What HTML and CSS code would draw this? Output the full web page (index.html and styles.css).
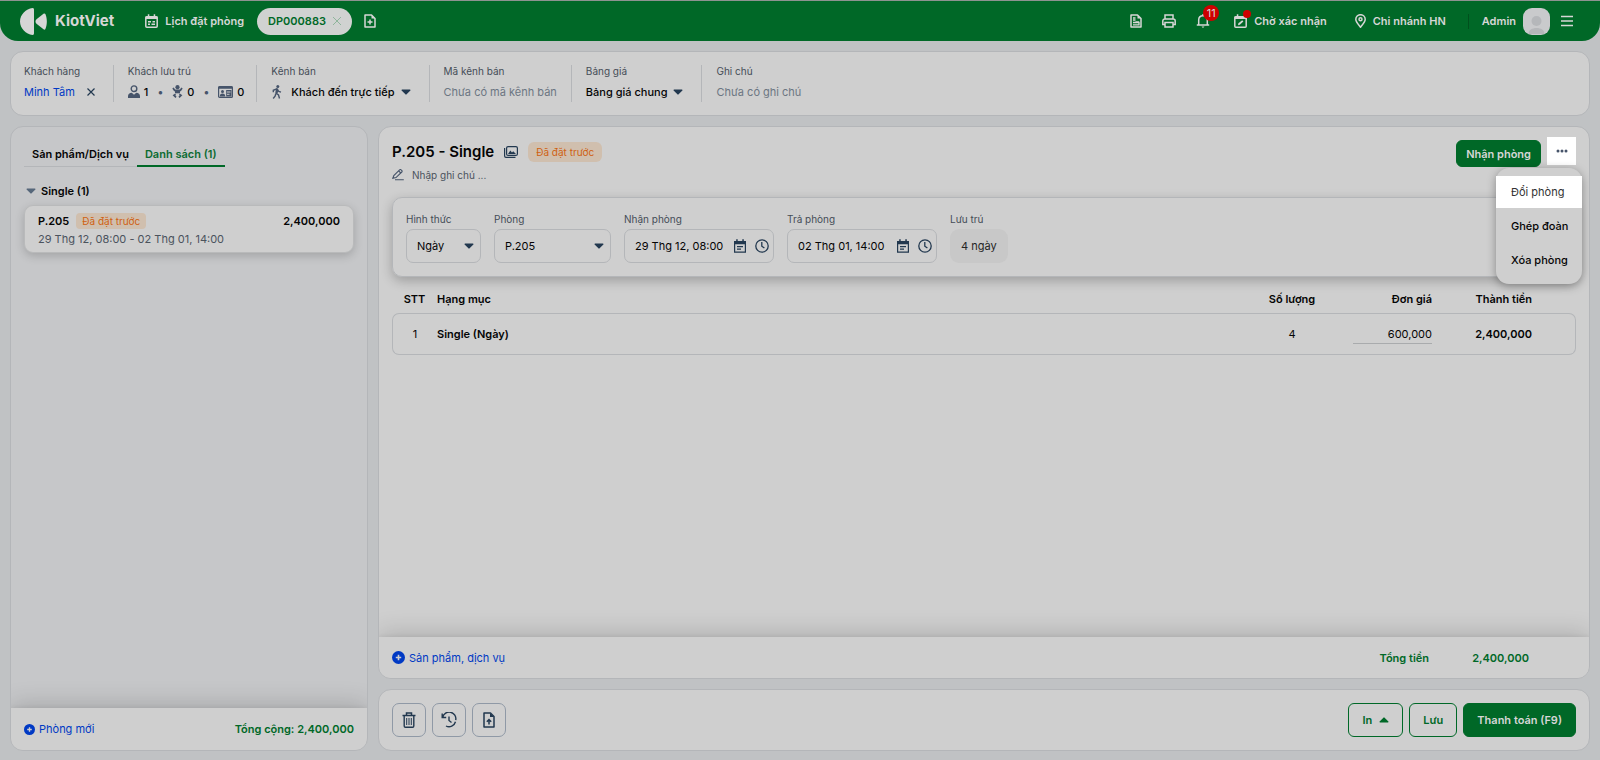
FILE: index.html
```html
<!DOCTYPE html>
<html lang="vi">
<head>
<meta charset="utf-8">
<title>KiotViet - DP000883</title>
<link rel="stylesheet" href="styles.css">
</head>
<body>
<svg class="sprite" aria-hidden="true">
  <symbol id="caret" viewBox="0 0 10 6"><path d="M1 .5h8a.6.6 0 0 1 .4 1L5.600 5.300a.8.8 0 0 1-1.200 0L.6 1.500a.6.6 0 0 1 .4-1z" fill="currentColor"/></symbol>
  <symbol id="plus-circle" viewBox="0 0 12 12"><circle cx="6" cy="6" r="6" fill="currentColor"/><path d="M6 3.500v5M3.500 6h5" stroke="#cfcfcf" stroke-width="1.500"/></symbol>
  <symbol id="calendar" viewBox="0 0 14 14"><path d="M1.600 2.500h10.800v10.700H1.600z" fill="none" stroke="currentColor" stroke-width="1.200"/><path d="M1 2h12v3.200H1zM3.200.3h1.500v2H3.200zM9.300.3h1.500v2H9.300z" fill="currentColor"/><path d="M4 7.600h6M4 10.200h4" stroke="currentColor" stroke-width="1.200"/></symbol>
  <symbol id="clock" viewBox="0 0 14 14"><circle cx="7" cy="7" r="6.200" fill="none" stroke="currentColor" stroke-width="1.300"/><path d="M6.800 3v4.200l2.600 1.800" fill="none" stroke="currentColor" stroke-width="1.300"/></symbol>
</svg>

<header class="topbar">
  <a class="brand" href="#">
    <svg width="27" height="27" viewBox="0 0 27 27"><path d="M12.500 0c1.300 0 1.500.8 1.500 2v23c0 1.200-.2 2-1.500 2C6 26 0 20.500 0 13.500S6 1 12.500 0zM15.500 13.500c0-1 .5-1.600 1-2.200l7-5.500c.8-.7 1.600-.5 2 .5 1.800 4.500 1.800 10 0 14.500-.4 1-1.200 1.200-2 .5l-7-5.600c-.5-.6-1-1.200-1-2.200z" fill="currentColor"/></svg>
    <span>KiotViet</span>
  </a>
  <a class="toplink schedule" href="#">
    <svg width="13" height="14" viewBox="0 0 13 14"><rect x=".8" y="2.700" width="11.400" height="10.500" rx="1" fill="none" stroke="currentColor" stroke-width="1.500"/><path d="M.5 2.500h12V5H.5zM2.800.3h1.500v2.500H2.800zM8.700.3h1.500v2.500H8.700z" fill="currentColor"/><path d="M3 7.700h3M7.500 7.700H10M3 10.300h2M6.500 10.300H10" stroke="currentColor" stroke-width="1.500"/></svg>
    Lịch đặt phòng
  </a>
  <div class="booking-tab">
    <span>DP000883</span>
    <button class="plain faint" aria-label="Đóng"><svg width="10" height="10" viewBox="0 0 10 10"><path d="M1 1l8 8M9 1L1 9" stroke="currentColor"/></svg></button>
  </div>
  <button class="plain new-tab" aria-label="Thêm"><svg width="12" height="14" viewBox="0 0 12 14"><path d="M1 1h6.500L11 4.500V13H1z" fill="none" stroke="currentColor" stroke-width="1.500" stroke-linejoin="round"/><path d="M7.500 1v3.500H11z" fill="currentColor"/><path d="M6 5.500v5M3.500 8h5" stroke="currentColor" stroke-width="1.500"/></svg></button>

  <nav class="tools">
    <button class="plain" aria-label="Tài liệu"><svg width="12" height="14" viewBox="0 0 12 14"><path d="M1 1h6.500L11 4.500V13H1z" fill="none" stroke="currentColor" stroke-width="1.500" stroke-linejoin="round"/><path d="M7.500 1v3.500H11z" fill="currentColor"/><path d="M3 4h2.500M3 6h2.500M3 8.500h6v2.300H3M5.500 8h3.500" fill="none" stroke="currentColor" stroke-width="1.300"/></svg></button>
    <button class="plain" aria-label="In"><svg width="14" height="14" viewBox="0 0 14 14" fill="none" stroke="currentColor" stroke-width="1.500"><path d="M3 5V1h8v4M3 10.500H.8V7A2 2 0 0 1 2.800 5h8.400a2 2 0 0 1 2 2v3.500H11M3 8.500h8V13H3z"/></svg></button>
    <button class="plain bell" aria-label="Thông báo"><svg width="14" height="14" viewBox="0 0 14 14"><path d="M.8 11h12.400M2.700 11V6c0-2.500 1.600-4.300 4.300-4.300S11.300 3.500 11.300 6v5" fill="none" stroke="currentColor" stroke-width="1.500"/><path d="M5.500 12.500h3L7 14zM6.300 0h1.400v2H6.300z" fill="currentColor"/></svg><span class="count">11</span></button>
    <button class="plain toplink pending"><span class="dotted"><svg width="13" height="14" viewBox="0 0 13 14"><rect x=".8" y="2.700" width="11.400" height="10.500" rx="1" fill="none" stroke="currentColor" stroke-width="1.500"/><path d="M.5 2.500h12V5H.5zM2.800.3h1.500v2.500H2.800z" fill="currentColor"/><path d="M4 11.200l.4-1.900 3.800-3 1.200 1.300-3.600 3.200z" fill="currentColor"/></svg><i class="dot"></i></span>Chờ xác nhận</button>
    <button class="plain toplink branch"><svg width="11" height="14" viewBox="0 0 11 14" fill="none" stroke="currentColor" stroke-width="1.500"><path d="M5.500 13.200C3 10.200.8 8 .8 5.300a4.700 4.600 0 0 1 9.400 0c0 2.700-2.200 4.900-4.700 7.900z"/><circle cx="5.500" cy="5.300" r="1.500"/></svg>Chi nhánh HN</button>
    <button class="plain toplink account">Admin
      <svg width="27" height="27" viewBox="0 0 27 27"><rect width="27" height="27" rx="9" fill="#c9cacc"/><circle cx="13.500" cy="13" r="5" fill="#b5b7ba"/><path d="M5.500 26c0-4 3.500-6 8-6s8 2 8 6z" fill="#b5b7ba"/></svg></button>
    <button class="plain" aria-label="Menu"><svg width="12" height="12" viewBox="0 0 12 12"><path d="M0 1.500h12M0 6h12M0 10.500h12" stroke="currentColor" stroke-width="1.500"/></svg></button>
  </nav>
</header>

<main class="page">
  <section class="card info">
    <div class="info-cell"><span class="label">Khách hàng</span>
      <div class="value"><a class="link" href="#">Minh Tâm</a><button class="plain clear" aria-label="Xóa khách"><svg width="8" height="8" viewBox="0 0 8 8"><path d="M.5.5l7 7M7.500.5l-7 7" stroke="currentColor" stroke-width="1.200"/></svg></button></div></div>
    <div class="info-cell guest-cell"><span class="label">Khách lưu trú</span>
      <div class="value guests">
        <span><svg width="12" height="13" viewBox="0 0 12 13"><circle cx="6" cy="3.700" r="2.800" fill="none" stroke="currentColor" stroke-width="1.400"/><path d="M0 13v-1.800C0 9 1.500 8 3.800 7.800L6 9.800l2.200-2C10.500 8 12 9 12 11.200V13z" fill="currentColor"/></svg>1</span>
        <i>•</i>
        <span><svg width="11" height="13" viewBox="0 0 11 13"><circle cx="5.500" cy="2.200" r="2.100" fill="currentColor"/><path d="M1 3l1.600 2.300h5.800L10 3" fill="none" stroke="currentColor" stroke-width="1.700"/><path d="M3 5h5v3.300H3z" fill="currentColor"/><path d="M3.600 9.300L2 10.300l2 2M7.400 9.300l1.600 1-2 2" fill="none" stroke="currentColor" stroke-width="1.700"/></svg>0</span>
        <i>•</i>
        <span><svg class="idcard" width="15" height="12" viewBox="0 0 15 12"><rect x=".6" y=".6" width="13.800" height="10.800" rx="1" fill="none" stroke="currentColor" stroke-width="1.200"/><path d="M.5.5h14v2.200H.5zM8.200 4h5.300v6.500H8.200z" fill="currentColor"/><circle cx="4.500" cy="5.500" r="1.500" fill="currentColor"/><path d="M1.800 10.500c0-2.200 1-2.900 2.700-2.900s2.700.7 2.700 2.900z" fill="currentColor"/><path d="M9 6h3.500M9 8.300h2.500" stroke="#cfcfcf" stroke-width="1"/></svg>0</span>
      </div></div>
    <div class="info-cell pick-cell"><span class="label">Kênh bán</span>
      <button class="plain value pick"><svg class="walk" width="12" height="14" viewBox="0 0 12 14"><circle cx="6.800" cy="1.500" r="1.500" fill="currentColor"/><path d="M5 3.500L7.200 3.800 7 7.500 5.500 8.500 4.300 8z" fill="currentColor"/><path d="M2.300 7.300V5.300L5.800 3.800 7.800 6.500l2.200.7M5 8l2.500 2L8.500 13.500M4.800 8.500L4.200 11l-2 2.500" fill="none" stroke="currentColor" stroke-width="1.400"/></svg>Khách đến trực tiếp<svg class="caret" width="10" height="6"><use href="#caret"/></svg></button></div>
    <div class="info-cell"><span class="label">Mã kênh bán</span><span class="value muted">Chưa có mã kênh bán</span></div>
    <div class="info-cell pick-cell"><span class="label">Bảng giá</span>
      <button class="plain value pick">Bảng giá chung<svg class="caret" width="10" height="6"><use href="#caret"/></svg></button></div>
    <div class="info-cell"><span class="label">Ghi chú</span><span class="value muted">Chưa có ghi chú</span></div>
  </section>

  <div class="columns">
    <aside class="card side">
      <div class="side-body">
        <div class="tabs"><button class="tab">Sản phẩm/Dịch vụ</button><button class="tab active">Danh sách (1)</button></div>
        <button class="plain group"><svg width="10" height="6"><use href="#caret"/></svg>Single (1)</button>
        <article class="room">
          <div class="room-top"><b>P.205</b><span class="tag small">Đã đặt trước</span><b class="amount">2,400,000</b></div>
          <div class="room-date">29 Thg 12, 08:00 - 02 Thg 01, 14:00</div>
        </article>
      </div>
      <footer class="side-foot">
        <button class="plain link add"><svg width="11" height="11"><use href="#plus-circle"/></svg>Phòng mới</button>
        <b class="green">Tổng cộng: 2,400,000</b>
      </footer>
    </aside>

    <div class="work">
      <section class="card detail">
        <div class="detail-body">
          <div class="head">
            <div class="head-text">
              <div class="title-row">
                <h1>P.205 - Single</h1>
                <svg class="photo" width="14" height="12" viewBox="0 0 14 12"><rect x="2.600" y=".6" width="10.800" height="8.800" rx="1.500" fill="none" stroke="currentColor" stroke-width="1.200"/><path d="M.6 2v8a1.400 1.400 0 0 0 1.400 1.400h9.500" fill="none" stroke="currentColor" stroke-width="1.200"/><path d="M4 8l2.300-3.500L8 6.500l1.200-1.300L12 8z" fill="currentColor"/></svg>
                <span class="tag">Đã đặt trước</span>
              </div>
              <button class="plain memo"><svg width="12" height="12" viewBox="0 0 12 12" fill="none" stroke="currentColor" stroke-width="1.100"><path d="M.8 9.300L1.800 6.600 7.600.8a1 1 0 0 1 1.500 0l.7.700a1 1 0 0 1 0 1.500L4 8.600zM6.600 1.800l2.200 2.200M3 10.700h8.800"/></svg>Nhập ghi chú ...</button>
            </div>
            <div class="head-actions">
              <button class="btn solid">Nhận phòng</button>
              <div class="more-wrap">
                <button class="more" aria-label="Thêm thao tác"><svg width="12" height="4" viewBox="0 0 12 4" fill="currentColor"><circle cx="2" cy="2" r="1.500"/><circle cx="6" cy="2" r="1.500"/><circle cx="10" cy="2" r="1.500"/></svg></button>
                <div class="menu" role="menu">
                  <button class="menu-item current" role="menuitem">Đổi phòng</button>
                  <button class="menu-item" role="menuitem">Ghép đoàn</button>
                  <button class="menu-item" role="menuitem">Xóa phòng</button>
                </div>
              </div>
            </div>
          </div>

          <form class="stay">
            <div class="field w-type"><label for="type">Hình thức</label>
              <div class="box"><select id="type"><option>Ngày</option></select><svg class="caret" width="10" height="6"><use href="#caret"/></svg></div></div>
            <div class="field w-room"><label for="room">Phòng</label>
              <div class="box"><select id="room"><option>P.205</option></select><svg class="caret" width="10" height="6"><use href="#caret"/></svg></div></div>
            <div class="field w-date"><label for="from">Nhận phòng</label>
              <div class="box"><input id="from" type="text" value="29 Thg 12, 08:00"><svg width="14" height="14"><use href="#calendar"/></svg><svg width="14" height="14"><use href="#clock"/></svg></div></div>
            <div class="field w-date"><label for="to">Trả phòng</label>
              <div class="box"><input id="to" type="text" value="02 Thg 01, 14:00"><svg width="14" height="14"><use href="#calendar"/></svg><svg width="14" height="14"><use href="#clock"/></svg></div></div>
            <div class="field"><span class="label">Lưu trú</span><span class="days">4 ngày</span></div>
          </form>

          <table class="items">
            <thead><tr><th class="c-no">STT</th><th class="c-name">Hạng mục</th><th class="c-qty">Số lượng</th><th class="c-price">Đơn giá</th><th class="c-total">Thành tiền</th><th class="c-end"></th></tr></thead>
            <tbody><tr><td class="c-no">1</td><td class="c-name strong">Single (Ngày)</td><td class="c-qty">4</td><td class="c-price"><input type="text" value="600,000" aria-label="Đơn giá"></td><td class="c-total strong">2,400,000</td><td class="c-end"></td></tr></tbody>
          </table>
        </div>
        <footer class="detail-foot">
          <button class="plain link add"><svg width="13" height="13"><use href="#plus-circle"/></svg>Sản phẩm, dịch vụ</button>
          <b class="green sum-label">Tổng tiền</b><b class="green sum">2,400,000</b>
        </footer>
      </section>

      <section class="card actions">
        <button class="icon-btn" aria-label="Xóa"><svg width="14" height="16" viewBox="0 0 14 16" fill="none" stroke="currentColor"><path d="M.5 3.500h13M4.500 3.500V1h5v2.500" stroke-width="1.500"/><path d="M2.200 3.500V14a1.200 1.200 0 0 0 1.200 1.200h7.200a1.200 1.200 0 0 0 1.200-1.200V3.500" stroke-width="1.400"/><path d="M4.700 6v7M7 6v7M9.300 6v7" stroke-width="1"/></svg></button>
        <button class="icon-btn" aria-label="Lịch sử"><svg width="16" height="16" viewBox="0 0 16 16" fill="none" stroke="currentColor" stroke-width="1.400"><path d="M1.200 1.500v4h4M1.700 5.300A6.600 6.600 0 0 1 14.700 8.200M14.500 9.800A6.700 6.700 0 0 1 5 14M8 4.500V8.500l2.500 2"/></svg></button>
        <button class="icon-btn" aria-label="Tải lên"><svg width="12" height="16" viewBox="0 0 12 16"><path d="M1 1h6.500L11 4.500V15H1z" fill="none" stroke="currentColor" stroke-width="1.500" stroke-linejoin="round"/><path d="M7 1v4h4z" fill="currentColor"/><path d="M6 12.500V8M3.800 9.700L6 7.500l2.200 2.200" fill="none" stroke="currentColor" stroke-width="1.500"/></svg></button>
        <button class="btn outline push">In<svg class="flip" width="10" height="6"><use href="#caret"/></svg></button>
        <button class="btn outline">Lưu</button>
        <button class="btn solid">Thanh toán (F9)</button>
      </section>
    </div>
  </div>
</main>
</body>
</html>
```
FILE: styles.css
```css
:root {
  --bg: #c0c2c4;
  --surface: #cfcfcf;
  --line: #b4b6b9;
  --green: #006827;
  --on-green: #d6d6d6;
  --slate: #46546a;
  --navy: #22384f;
  --blue: #0039c4;
}

* { box-sizing: border-box; }

body {
  margin: 0;
  min-height: 100vh;
  display: flex;
  flex-direction: column;
  background: var(--bg);
  color: #050505;
  font: 400 11px/16px Inter, "Noto Sans", sans-serif;
}

svg { display: block; flex: none; }
.sprite { position: absolute; width: 0; height: 0; }
button, input, select { font: inherit; color: inherit; }
button { cursor: pointer; }
a { color: inherit; text-decoration: none; }
b { font-weight: 600; }

.plain { display: flex; align-items: center; padding: 0; border: 0; background: none; }

/* Top bar */
.topbar {
  display: flex;
  align-items: center;
  height: 41px;
  padding: 0 27px 0 20px;
  border-top: 1px solid #8d9390;
  border-radius: 0 0 18px 18px;
  background: var(--green);
  color: var(--on-green);
}
.brand { display: flex; align-items: center; gap: 8px; font-size: 15px; font-weight: 700; }
.toplink { display: flex; align-items: center; gap: 7px; font-weight: 600; }
.schedule { margin-left: 31px; }
.booking-tab {
  display: flex;
  align-items: center;
  gap: 6px;
  height: 27px;
  margin-left: 13px;
  padding: 0 10px 0 11px;
  border-radius: 14px;
  background: #d0d2d1;
  color: var(--green);
  font-weight: 600;
}
.faint { color: #8fb59c; }
.new-tab { margin-left: 12px; }
.tools { display: flex; align-items: center; margin-left: auto; gap: 20px; }
.bell { position: relative; }
.count {
  position: absolute;
  left: 7px;
  top: -9px;
  min-width: 16px;
  height: 16px;
  border-radius: 8px;
  background: #cf0000;
  text-align: center;
}
.pending { margin-left: 4px; }
.dotted { position: relative; }
.dot { position: absolute; right: -4px; top: -4px; width: 8px; height: 8px; border-radius: 50%; background: #cf0000; }
.branch { margin-left: 8px; }
.account { margin: 0 -9px 0 2px; padding-left: 14px; background: linear-gradient(#00501d, #00501d) left center / 1px 15px no-repeat; }

/* Page frame */
.page { flex: 1; display: flex; flex-direction: column; gap: 10px; padding: 10px 10px 9px; }
.card { border: 1px solid var(--line); border-radius: 13px; background: var(--surface); }

/* Booking info */
.info { display: flex; padding: 13px 0; }
.info-cell { padding: 0 14px 2px; border-right: 1px solid var(--line); }
.info-cell:first-child { padding: 0 18px 0 13px; }
.info-cell:last-child { border-right: 0; }
.guest-cell { padding-right: 12px; }
.pick-cell { padding-right: 18px; }
.label, .field label { display: block; color: #454d57; font-size: 10px; }
.info .label { margin-bottom: 6px; line-height: 12px; }
.value { display: flex; align-items: center; height: 17px; }
.link { color: var(--blue); }
.muted { color: #6c7682; }
.clear { margin-left: 12px; color: var(--navy); }
.guests { gap: 9px; color: #050505; font-weight: 500; }
.guests span { display: flex; align-items: center; gap: 4px; }
.guests svg, .guests i, .walk { color: var(--slate); }
.guests i { font-style: normal; }
.pick { font-weight: 500; }
.walk { margin-right: 8px; }
.caret { margin-left: 6px; color: var(--navy); }

/* Columns */
.columns { flex: 1; display: grid; grid-template-columns: 358px minmax(0, 1fr); gap: 10px; }
.side, .work { display: flex; flex-direction: column; }
.side { overflow: hidden; background: #c6c7c9; }
.side-body { flex: 1; padding: 15px 13px 0; }
.tabs { display: flex; }
.tab { padding: 4px 8px; border: 0; border-bottom: 1px solid var(--line); background: none; font-weight: 600; }
.tab.active { border-bottom: 1px solid var(--green); box-shadow: inset 0 -1px var(--green); color: #0c6b31; }
.group { gap: 5px; margin: 16px 0 6px 2px; font-weight: 600; }
.group svg { color: #56677a; }
.room {
  padding: 7px 13px 5px;
  border: 1px solid #b9babb;
  border-radius: 9px;
  background: var(--surface);
  box-shadow: 0 3px 10px rgba(0, 0, 0, .18);
}
.room-top { display: flex; align-items: center; gap: 7px; margin-bottom: 2px; }
.amount { margin-left: auto; }
.room-date { color: #4b535d; }
.tag { padding: 2px 8px; border-radius: 6px; background: #d0bfae; color: #cf5f12; font-size: 10px; }
.tag.small { padding: 0 6px; border-radius: 4px; }
.side-foot, .detail-foot {
  display: flex;
  align-items: center;
  justify-content: space-between;
  height: 42px;
  padding: 0 13px;
  background: var(--surface);
  box-shadow: 0 -4px 24px rgba(0, 0, 0, .16), 0 -1px 4px rgba(0, 0, 0, .06);
}
.add { gap: 4px; }
.green { color: var(--green); }

/* Room detail */
.work { gap: 10px; }
.detail { flex: 1; display: flex; flex-direction: column; overflow: hidden; }
.detail-body { flex: 1; padding: 10px 13px 0; }
.head { display: flex; justify-content: space-between; }
.title-row { display: flex; align-items: center; gap: 10px; margin-top: 4px; }
h1 { margin: 0; font-size: 15px; line-height: 22px; font-weight: 600; }
.photo { color: var(--navy); }
.memo { gap: 8px; margin-top: 4px; color: #4b535d; font-size: 10px; }
.memo svg { color: var(--slate); }
.head-actions { display: flex; align-items: flex-start; gap: 6px; }
.btn {
  display: flex;
  align-items: center;
  justify-content: center;
  gap: 7px;
  height: 34px;
  padding: 0 13px;
  border: 1px solid var(--green);
  border-radius: 6px;
  background: none;
  color: var(--green);
  font-weight: 600;
}
.btn.solid { background: var(--green); color: var(--on-green); }
.head-actions .solid { height: 27px; margin-top: 3px; padding: 0 9px; }
.more-wrap { position: relative; }
.more { display: grid; place-items: center; width: 29px; height: 28px; padding: 0; border: 0; background: #fff; color: var(--slate); }
.menu {
  position: absolute;
  z-index: 2;
  top: 31px;
  right: -6px;
  width: 86px;
  padding: 8px 0;
  border-radius: 13px;
  background: var(--surface);
  box-shadow: 0 2px 10px rgba(0, 0, 0, .35);
}
.menu-item { display: block; width: 100%; height: 32px; margin-bottom: 2px; padding: 0 15px; border: 0; background: none; text-align: left; font-weight: 500; white-space: nowrap; }
.menu-item:last-child { margin-bottom: 0; }
.menu-item.current { background: #fff; color: #333; font-weight: 400; }

.stay {
  display: flex;
  gap: 13px;
  margin-top: 14px;
  padding: 13px;
  border: 1px solid var(--line);
  border-radius: 10px;
  box-shadow: 0 4px 12px rgba(0, 0, 0, .24);
}
.field label, .field .label { margin-bottom: 2px; }
.box { display: flex; align-items: center; gap: 8px; height: 34px; padding: 0 4px 0 10px; border: 1px solid var(--line); border-radius: 7px; }
.box select, .box input { flex: 1; min-width: 0; padding: 0; border: 0; outline: 0; background: none; appearance: none; }
.box svg { color: var(--navy); }
.box .caret { margin: 0 2px 0 0; }
.w-type { width: 75px; }
.w-room { width: 117px; }
.w-date { width: 150px; }
.days { display: flex; align-items: center; height: 34px; padding: 0 11px; border-radius: 9px; background: #c8c8c8; color: #252525; }

.items { width: 100%; margin-top: 14px; border-collapse: separate; border-spacing: 0; table-layout: fixed; }
.items th { height: 22px; padding: 0; font-weight: 600; text-align: left; vertical-align: top; }
.items td { height: 42px; padding: 0; border: solid var(--line); border-width: 1px 0; }
.items td:first-child { border-left-width: 1px; border-radius: 7px 0 0 7px; }
.items td:last-child { border-right-width: 1px; border-radius: 0 7px 7px 0; }
.items .c-no { width: 45px; text-align: center; }
.items .c-qty { width: 70px; text-align: center; }
.items .c-price { width: 105px; text-align: right; }
.items .c-total { width: 100px; text-align: right; }
.items .c-end { width: 44px; }
.items input { width: 79px; height: 20px; padding: 0; border: 0; border-bottom: 1px solid #a9abad; border-radius: 0; background: none; text-align: right; }
.strong { font-weight: 600; }
.detail-foot { height: 41px; padding-right: 60px; }
.sum-label { margin-left: auto; }
.sum { width: 100px; text-align: right; }

/* Bottom actions */
.actions { display: flex; gap: 6px; padding: 13px; }
.icon-btn { display: grid; place-items: center; width: 34px; height: 34px; padding: 0; border: 1px solid #8f99a6; border-radius: 7px; background: none; color: var(--navy); }
.push { margin-left: auto; }
.flip { transform: rotate(180deg); }
```
